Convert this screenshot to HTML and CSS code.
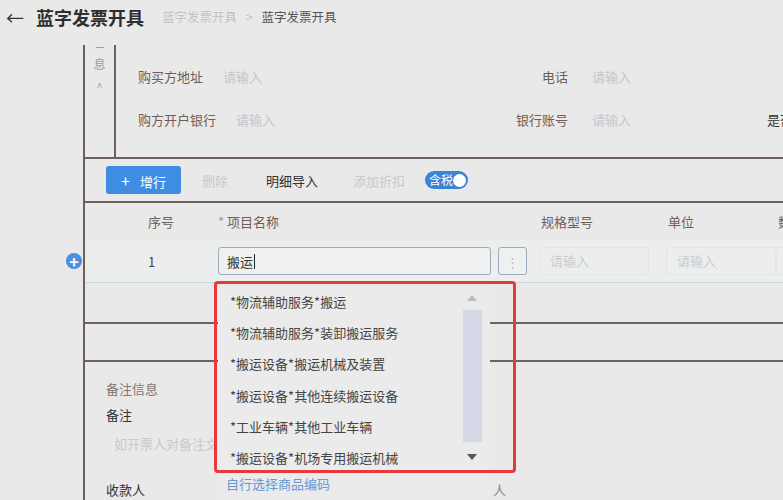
FILE: index.html
```html
<!DOCTYPE html>
<html lang="zh-CN">
<head>
    <meta charset="UTF-8">
    <meta name="viewport" content="width=device-width, initial-scale=1.0">
    <title>蓝字发票开具</title>
    <link rel="stylesheet" href="styles.css">
</head>
<body>
<div class="page">
    <header class="page-header">
        <span class="back">←</span>
        <h1 class="title">蓝字发票开具</h1>
        <nav class="crumb">
            <span class="crumb-prev">蓝字发票开具</span>
            <span class="crumb-sep">&gt;</span>
            <span class="crumb-cur">蓝字发票开具</span>
        </nav>
    </header>

    <main class="content">
        <section class="buyer">
            <div class="side-tab">
                <span class="side-dash"></span>
                <span class="side-text">息</span>
                <span class="side-arrow">^</span>
            </div>
            <div class="buyer-fields">
                <div class="field-row">
                    <div class="field field-a"><span class="label">购买方地址</span><span class="ph">请输入</span></div>
                    <div class="field field-b"><span class="label">电话</span><span class="ph">请输入</span></div>
                </div>
                <div class="field-row">
                    <div class="field field-a"><span class="label">购方开户银行</span><span class="ph">请输入</span></div>
                    <div class="field field-b"><span class="label">银行账号</span><span class="ph">请输入</span></div>
                    <div class="field field-c"><span class="label-dark">是否展示</span></div>
                </div>
            </div>
        </section>

        <div class="toolbar">
            <button class="btn-add"><span class="plus">+</span>增行</button>
            <span class="tool tool-off tool-del">删除</span>
            <span class="tool tool-import">明细导入</span>
            <span class="tool tool-off tool-discount">添加折扣</span>
            <span class="switch"><span class="switch-text">含税</span><span class="switch-dot"></span></span>
        </div>

        <div class="grid grid-head">
            <span></span>
            <span>序号</span>
            <span><i class="req">*</i> 项目名称</span>
            <span>规格型号</span>
            <span>单位</span>
            <span>数量</span>
        </div>

        <div class="grid grid-row">
            <span></span>
            <span class="idx">1</span>
            <span class="name-cell">
                <span class="name-input">搬运<span class="caret"></span></span>
                <span class="more-btn">⋮</span>
            </span>
            <span><span class="cell-input">请输入</span></span>
            <span><span class="cell-input">请输入</span></span>
            <span><span class="cell-input">请输入</span></span>
        </div>

        <div class="blank-row blank-first"></div>
        <div class="blank-row"></div>

        <section class="remark">
            <div class="remark-title">备注信息</div>
            <div class="remark-label">备注</div>
            <div class="remark-ph">如开票人对备注文</div>
            <div class="payee-row">
                <span class="remark-label">收款人</span>
                <span class="checker">人</span>
            </div>
        </section>
    </main>

    <span class="add-circle">+</span>

    <div class="suggest">
        <ul class="suggest-list">
            <li>*物流辅助服务*搬运</li>
            <li>*物流辅助服务*装卸搬运服务</li>
            <li>*搬运设备*搬运机械及装置</li>
            <li>*搬运设备*其他连续搬运设备</li>
            <li>*工业车辆*其他工业车辆</li>
            <li>*搬运设备*机场专用搬运机械</li>
        </ul>
        <div class="scrollbar">
            <span class="arrow-up"></span>
            <span class="thumb"></span>
            <span class="arrow-down"></span>
        </div>
        <a class="suggest-link">自行选择商品编码</a>
    </div>

    <div class="mark"></div>
</div>
</body>
</html>
```

FILE: styles.css
```css
body {
    margin: 0;
    background: #e9e9e9;
    font-family: "Noto Sans CJK SC", "Noto Sans", sans-serif;
    color: #333;
    font-size: 13px;
    overflow: hidden;
}
.page {
    position: relative;
    width: 783px;
    height: 500px;
    overflow: hidden;
}

/* header */
.page-header {
    height: 45px;
    box-sizing: border-box;
    padding: 4px 0 0 6px;
    display: flex;
    align-items: flex-start;
    line-height: 26px;
}
.back {
    font-size: 18px;
    width: 30px;
    color: #333;
}
.title {
    margin: 0 18px 0 0;
    font-size: 18px;
    font-weight: bold;
    color: #2e2e2e;
}
.crumb {
    font-size: 12.5px;
    color: #555;
}
.crumb-prev {
    color: #c3c3c3;
}
.crumb-sep {
    color: #c3c3c3;
    margin: 0 6px;
}

/* content */
.content {
    margin-left: 83px;
    border-left: 2px solid #6e605d;
    height: 455px;
}
.buyer {
    display: flex;
    height: 112px;
    border-bottom: 2px solid #6e605d;
}
.side-tab {
    flex: none;
    width: 31px;
    box-sizing: border-box;
    border-right: 2px solid #6e605d;
    display: flex;
    flex-direction: column;
    align-items: center;
    color: #9a9a9a;
    font-size: 12px;
    line-height: 16px;
}
.side-dash {
    width: 8px;
    height: 1px;
    background: #a0a0a0;
    margin: 2px 0 8px;
}
.side-arrow {
    margin-top: 6px;
    font-size: 11px;
}
.buyer-fields {
    padding: 10px 0 0 22px;
    flex: 1;
}
.field-row {
    display: flex;
    height: 43px;
    align-items: center;
}
.field {
    display: flex;
    align-items: center;
    flex: none;
}
.field-a {
    width: 360px;
    gap: 20px;
}
.field-b {
    width: 269px;
    gap: 24px;
}
.field-b .label {
    width: 70px;
    text-align: right;
}
.label {
    color: #6f5d57;
}
.label-dark {
    color: #333;
    white-space: nowrap;
}
.ph {
    color: #c3c6cf;
}

/* toolbar */
.toolbar {
    height: 42px;
    border-bottom: 2px solid #6e605d;
    display: flex;
    align-items: center;
    padding-left: 21px;
}
.btn-add {
    width: 75px;
    height: 28px;
    border: none;
    border-radius: 3px;
    background: #3f8de2;
    color: #fff;
    font-family: inherit;
    font-size: 13px;
    padding: 0;
}
.plus {
    font-size: 16px;
    margin-right: 10px;
}
.tool {
    color: #333;
}
.tool-off {
    color: #c9c9c9;
}
.tool-del {
    margin-left: 21px;
}
.tool-import {
    margin-left: 38px;
}
.tool-discount {
    margin-left: 35px;
}
.switch {
    margin-left: 20px;
    width: 43px;
    height: 18px;
    border-radius: 9px;
    background: #3b82d8;
    display: flex;
    align-items: center;
    justify-content: space-between;
    box-sizing: border-box;
    padding: 0 2px 0 4px;
}
.switch-text {
    color: #fff;
    font-size: 12px;
    line-height: 18px;
}
.switch-dot {
    width: 13px;
    height: 13px;
    border-radius: 50%;
    background: #fff;
}

/* detail table */
.grid {
    display: grid;
    grid-template-columns: 63px 70px 323px 127px 110px 120px;
    align-items: center;
    white-space: nowrap;
}
.grid-head {
    height: 37px;
    color: #6f5d57;
}
.req {
    font-style: normal;
    color: #999;
}
.grid-row {
    height: 42px;
    background: #eceded;
    border-bottom: 1px solid #cbd6dc;
}
.idx {
    color: #444;
}
.name-cell {
    display: flex;
    gap: 7px;
}
.name-input,
.more-btn {
    height: 28px;
    box-sizing: border-box;
    border: 1px solid #9eabbb;
    border-radius: 3px;
    background: #eff1f1;
    display: flex;
    align-items: center;
}
.name-input {
    width: 273px;
    padding-left: 8px;
    color: #333;
}
.caret {
    width: 1px;
    height: 15px;
    background: #222;
    margin-left: 1px;
}
.more-btn {
    width: 29px;
    justify-content: center;
    color: #b8bec6;
}
.cell-input {
    display: block;
    width: 110px;
    height: 28px;
    box-sizing: border-box;
    margin-left: -2px;
    padding-left: 10px;
    line-height: 26px;
    border: 1px solid #e3e5e6;
    border-radius: 3px;
    background: #eceeee;
    color: #c9ccd2;
}
.blank-row {
    height: 36px;
    border-bottom: 2px solid #6e605d;
}
.blank-first {
    height: 39px;
}

/* remark */
.remark {
    padding: 17px 0 0 21px;
}
.remark-title {
    color: #86746c;
    line-height: 20px;
}
.remark-label {
    color: #333;
    line-height: 20px;
    margin-top: 6px;
}
.remark-ph {
    color: #c6c9d0;
    line-height: 20px;
    margin: 9px 0 0 8px;
}
.payee-row {
    display: flex;
    margin-top: 26px;
}
.payee-row .remark-label {
    margin-top: 0;
}
.checker {
    margin-left: 348px;
    color: #888;
    line-height: 20px;
}

/* overlays */
.add-circle {
    position: absolute;
    left: 66px;
    top: 253px;
    width: 16px;
    height: 16px;
    border-radius: 50%;
    background: #4b8fe0;
    color: #fff;
    font-size: 16px;
    font-weight: bold;
    line-height: 16px;
    text-align: center;
}
.suggest {
    position: absolute;
    left: 218px;
    top: 286px;
    width: 272px;
    height: 212px;
    background: #ebebeb;
}
.suggest-list {
    list-style: none;
    margin: 0;
    padding: 0 0 0 12px;
    color: #444;
}
.suggest-list li {
    height: 31.2px;
    line-height: 31.2px;
    white-space: nowrap;
}
.scrollbar {
    position: absolute;
    left: 245px;
    top: 6px;
    width: 19px;
    height: 170px;
}
.arrow-up,
.arrow-down {
    position: absolute;
    left: 4px;
    width: 0;
    height: 0;
    border-left: 5px solid transparent;
    border-right: 5px solid transparent;
}
.arrow-up {
    top: 3px;
    border-bottom: 6px solid #b8bac6;
}
.arrow-down {
    top: 162px;
    border-top: 6px solid #555;
}
.thumb {
    position: absolute;
    left: 0;
    top: 18px;
    width: 19px;
    height: 132px;
    background: #d6d8e8;
}
.suggest-link {
    position: absolute;
    left: 8px;
    top: 188px;
    color: #6598d6;
    line-height: 20px;
}
.mark {
    position: absolute;
    left: 214px;
    top: 281px;
    width: 302px;
    height: 192px;
    box-sizing: border-box;
    border: 3px solid #e6393b;
    border-radius: 4px;
}
```
